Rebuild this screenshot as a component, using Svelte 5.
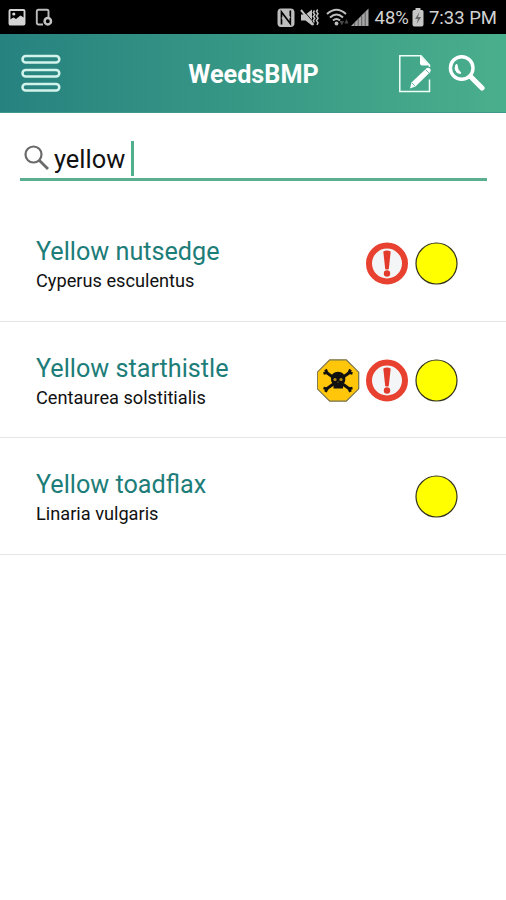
<script>
  const weeds = [
    { name: 'Yellow nutsedge', latin: 'Cyperus esculentus', badges: ['alert', 'yellow'] },
    { name: 'Yellow starthistle', latin: 'Centaurea solstitialis', badges: ['poison', 'alert', 'yellow'] },
    { name: 'Yellow toadflax', latin: 'Linaria vulgaris', badges: ['yellow'] }
  ];
  let query = $state('yellow');
</script>

<div class="screen">
  <div class="status">
    <div class="notes">
      <svg width="18" height="18" viewBox="0 0 18 18">
        <rect x="1.500" y="2" width="15" height="14.500" rx="1" fill="none" stroke="#d4d4d4" stroke-width="1.900" />
        <circle cx="5.800" cy="6" r="1.600" fill="#d4d4d4" />
        <path d="M2 11.500l3.500-2 2.500 1.500L12.500 7.500l4 2.500v6H2z" fill="#d4d4d4" />
      </svg>
      <svg width="18" height="18" viewBox="0 0 18 18">
        <path d="M8 16.500H3.500Q1.800 16.500 1.800 14.800V3.300Q1.800 1.700 3.500 1.700h8.500Q13.500 1.700 13.500 3.300V9" fill="none" stroke="#bcbcbc" stroke-width="1.900" />
        <circle cx="12.800" cy="13.200" r="3.200" fill="none" stroke="#c4c4c4" stroke-width="2.500" />
      </svg>
    </div>
    <div class="system">
      <svg width="18" height="19" viewBox="0 0 18 19">
        <path d="M4 .5h9.500Q17.500.5 17.500 4.500V15Q17.500 19 13.500 19H4Q.5 19 .5 15V4.500Q.5.5 4 .5z" fill="#bebebe" />
        <path d="M4.500 16.500V4L13.300 15.500V2.500" fill="none" stroke="#050505" stroke-width="1.700" />
        <path d="M7.500 3L13 10M5 9.500L10.500 16.500" stroke="#bebebe" stroke-width="1.500" />
      </svg>
      <svg class="mute" width="20" height="19" viewBox="0 0 20 19">
        <path d="M1 6.500h4.500L12 1.500v16l-6.500-5H1z" fill="#c2c2c2" />
        <path d="M1 2L13.500 17" stroke="#c2c2c2" stroke-width="2" />
        <path d="M2.800 1.800L12.500 13" stroke="#000" stroke-width=".9" />
        <path d="M14.500 2.500l-1.200 2 1.500 2-1.500 2 1.500 2-1.500 2 1 2M17.700 1.500l-1.200 2 1.500 2.200-1.500 2.300 1.500 2.300-1.500 2.300 1.500 2.300-1 2" fill="none" stroke="#c2c2c2" stroke-width="1.500" />
      </svg>
      <svg class="wifi" width="24" height="19" viewBox="0 0 24 19">
        <g fill="none" stroke="#bdbdbd" stroke-width="2.100">
          <path d="M1 6Q10.500-2.500 20 6" />
          <path d="M4 9.500Q10.500 3.500 17 9.500" />
          <path d="M7 12.500Q10.500 9.500 14 12.500" />
        </g>
        <circle cx="10.500" cy="15.500" r="1.900" fill="#bdbdbd" />
        <path d="M13.500 13h4.500l-2.200 4.500zM18.500 15.500l2-4.500 2 4.500z" fill="#484848" />
      </svg>
      <svg class="signal" width="18" height="18" viewBox="0 0 18 18">
        <path d="M0 18L17.500.5V18z" fill="#a5a5a5" />
        <path d="M3.700 18v-4M7.200 18v-7M10.700 18V8M14.200 18V4" stroke="#4a4a4a" stroke-width=".8" />
      </svg>
      <span class="pct">48%</span>
      <svg class="battery" width="12" height="19" viewBox="0 0 12 19">
        <path d="M3.500 0h5v2H10q1.500 0 1.500 1.500v13q0 2-2 2h-7q-2 0-2-2v-13Q.5 2 2 2h1.500z" fill="#c6c6c6" />
        <path d="M7.500 4L3 11h3l-1.500 5L9.200 9H6z" fill="#666" />
      </svg>
      <span class="time">7:33 PM</span>
    </div>
  </div>

  <header>
    <svg class="menu" width="40" height="38" viewBox="0 0 40 38">
      <g fill="none" stroke="#d3f4ec" stroke-width="2.500">
        <rect x="1.500" y="2" width="36.800" height="6.500" rx="3.250" />
        <rect x="1.500" y="16" width="36.800" height="6.500" rx="3.250" />
        <rect x="1.500" y="30" width="36.800" height="6.500" rx="3.250" />
      </g>
    </svg>
    <h1>WeedsBMP</h1>
    <div class="actions">
      <svg width="34" height="39" viewBox="0 0 34 39">
        <path d="M30.500 25.500V37.500H.8V1.800H22L30.500 11V13" fill="none" stroke="#effff8" stroke-width="1.500" />
        <path d="M21 1.800L30.500 11.500H23Q21 11.500 21 9.500z" fill="#fff" />
        <path d="M11 34.500L12.500 28.500L27.500 14.300Q29.500 13 31.200 14.800Q32.500 16.500 31 18.300L16.500 32.500z" fill="#fff" />
        <path d="M26.500 15.500L30 19M13 29l3 3" stroke="#48a98b" stroke-width=".8" />
      </svg>
      <svg width="37" height="38" viewBox="0 0 37 38">
        <circle cx="13.700" cy="14" r="11.300" fill="none" stroke="#fff" stroke-width="3.400" />
        <path d="M22.500 22.500L34 34" stroke="#fff" stroke-width="5.200" stroke-linecap="round" />
        <path d="M8 10.500Q5.500 15 9 18.500Q12.500 20 13 19Q9 16 9 10.500z" fill="#fff" stroke="#fff" stroke-width="1" />
      </svg>
    </div>
  </header>

  <div class="search">
    <svg width="26" height="27" viewBox="0 0 26 27">
      <circle cx="9.500" cy="9.500" r="8" fill="none" stroke="#6a6a6a" stroke-width="2.200" />
      <path d="M15.200 15.200L24 24" stroke="#6a6a6a" stroke-width="2.800" />
    </svg>
    <span class="query">{query}</span>
    <i class="caret"></i>
  </div>

  <main>
    {#each weeds as weed}
      <div class="row">
        <div class="names">
          <div class="name">{weed.name}</div>
          <div class="latin">{weed.latin}</div>
        </div>
        <div class="badges">
          {#each weed.badges as badge}
            <svg width="43" height="43" viewBox="0 0 43 43">
              {#if badge === 'yellow'}
                <circle cx="21.500" cy="21.500" r="20.500" fill="#ff0" stroke="#33331c" stroke-width="1.200" />
              {:else if badge === 'alert'}
                <circle cx="21" cy="21.500" r="18" fill="#f4f5f6" stroke="#e8412f" stroke-width="6" />
                <path d="M17.300 9.500Q21 7.500 24.700 9.500L22.800 27Q21 28 19.200 27z" fill="#e33b2b" />
                <circle cx="21" cy="31.500" r="3.200" fill="#e33b2b" />
              {:else}
                <path d="M12.700.8H29.300L41.700 13.200V29.800L29.300 42.200H12.700L.3 29.800V13.200z" fill="#ffc60a" stroke="#77724e" stroke-width="1.200" />
                <g stroke="#111" fill="none">
                  <path d="M8 12.500L34 31M34 12.500L8 31" stroke-width="2.800" />
                  <path d="M8.500 10.500L10 13.500L6.500 14.500M33.500 10.500L32 13.500L35.500 14.500M6.500 29L10 29.700L8.500 32.800M35.500 29L32 29.700L33.500 32.800" stroke-width="2.800" />
                </g>
                <path d="M14 19.500Q14.500 12.800 21 12.800T28.300 19.500Q28.500 23.500 26 25V29.500H16.500V25Q13.800 23.500 14 19.500z" fill="#111" />
                <circle cx="18" cy="20.500" r="1.600" fill="#b98f10" />
                <circle cx="24" cy="20.500" r="1.600" fill="#b98f10" />
                <path d="M21 22.500v1.500" stroke="#80640e" stroke-width=".8" />
              {/if}
            </svg>
          {/each}
        </div>
      </div>
    {/each}
  </main>
</div>

<style>
  :global(body) { margin: 0; background: #fff; }
  .screen { width: 506px; height: 900px; overflow: hidden; background: #fff; color: #111; font-family: Roboto, "Liberation Sans", sans-serif; display: flex; flex-direction: column; }
  svg { display: block; flex: none; }
  .status { height: 34px; background: #000; display: flex; justify-content: space-between; align-items: flex-start; padding: 8px 9px 0 8px; box-sizing: border-box; flex: none; }
  .notes { display: flex; gap: 9px; }
  .system { display: flex; color: #d2d2d2; font-size: 18.5px; line-height: 21px; white-space: nowrap; }
  .mute { margin-left: 5px; }
  .wifi { margin-left: 6px; }
  .signal { margin-left: 1px; }
  .pct { margin-left: 6px; }
  .battery { margin-left: 3px; }
  .time { margin-left: 5px; }
  header { height: 79px; box-sizing: border-box; border-bottom: 1px solid #3b988a; background: linear-gradient(90deg, #26827f, #4aaf8c); display: grid; grid-template-columns: 1fr auto 1fr; align-items: center; padding: 0 21px; flex: none; }
  h1 { margin: 3px 0 0 1px; color: #fff; font-size: 25.2px; line-height: 30px; font-weight: 700; }
  .actions { display: flex; gap: 15px; justify-self: end; }
  .search { height: 46px; margin: 22px 19px 0 20px; border-bottom: 3px solid #5aaf91; display: flex; align-items: flex-start; box-sizing: border-box; flex: none; }
  .search svg { margin: 10px 0 0 4px; }
  .query { margin: 9px 0 0 4px; font-size: 25.4px; line-height: 30px; }
  .caret { width: 3px; height: 35px; margin: 6px 0 0 6px; background: #50b08e; }
  main { margin-top: 24px; }
  .row { height: 116.5px; box-sizing: border-box; border-bottom: 1px solid #e4e4e4; padding: 31px 48px 0 36px; display: flex; justify-content: space-between; }
  .name { font-size: 25.2px; line-height: 31px; color: #1d7d79; white-space: nowrap; }
  .latin { font-size: 18.2px; line-height: 24px; margin-top: 2px; white-space: nowrap; }
  .badges { display: flex; gap: 6px; padding-top: 6px; }
</style>
